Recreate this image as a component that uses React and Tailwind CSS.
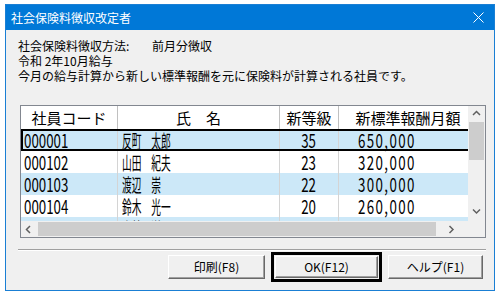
const rows = [
  { code: "000001", name: "反町　太郎", grade: "35", amount: "650,000" },
  { code: "000102", name: "山田　紀夫", grade: "23", amount: "320,000" },
  { code: "000103", name: "渡辺　崇", grade: "22", amount: "300,000" },
  { code: "000104", name: "鈴木　光一", grade: "20", amount: "260,000" },
  { code: "000105", name: "小林　洋子", grade: "26", amount: "470,000" },
];

const Chevron = ({ dir }) => {
  const d = {
    up: "M1 5L4.5 1.5L8 5",
    down: "M1 1.5L4.5 5L8 1.5",
    left: "M5 1L1.5 4.5L5 8",
    right: "M1.5 1L5 4.5L1.5 8",
  }[dir];
  return (
    <svg width="9" height="9" viewBox="0 0 9 9">
      <path d={d} fill="none" stroke="#606060" strokeWidth="1.5" />
    </svg>
  );
};

const Button = ({ children, className = "" }) => (
  <div
    className={`flex items-center justify-center bg-[#f0f0f0] border-t border-l border-white border-r border-b border-r-[#696969] border-b-[#696969] shadow-[inset_-1px_-1px_0_#a0a0a0] text-[12px] leading-none ${className}`}
  >
    {children}
  </div>
);

export default function App() {
  return (
    <div className="w-[499px] h-[296px] bg-white pt-[4px] pl-[5px] font-['Noto_Sans_CJK_JP',sans-serif] text-black">
      <div className="w-[490px] h-[287px] border border-[#1a7fd4] bg-[#f0f0f0] flex flex-col">
        {/* title bar */}
        <div className="h-[25px] shrink-0 bg-[#0078d7] flex items-center justify-between pl-[5px] pr-[10px] text-white text-[12px]">
          <span>社会保険料徴収改定者</span>
          <svg width="11" height="11" viewBox="0 0 11 11">
            <path d="M0.5 0.5L10.5 10.5M10.5 0.5L0.5 10.5" stroke="white" strokeWidth="1" />
          </svg>
        </div>

        {/* description */}
        <div className="pl-[12px] pt-[8px] text-[12px] leading-[15px]">
          <div className="flex">
            <span className="w-[134px]">社会保険料徴収方法:</span>
            <span>前月分徴収</span>
          </div>
          <div>令和 2年10月給与</div>
          <div>今月の給与計算から新しい標準報酬を元に保険料が計算される社員です。</div>
        </div>

        {/* list */}
        <div className="ml-[14px] mt-[22px] w-[466px] h-[133px] border border-[#828790] bg-white flex flex-col">
          <div className="flex h-[115px]">
            <div className="w-[447px] overflow-hidden">
              <div className="flex h-[23px] w-[456px] bg-white text-[15px] leading-[23px]">
                <div className="w-[97px] text-center border-r border-[#c0c0c0]">社員コード</div>
                <div className="w-[162px] text-center border-r border-[#c0c0c0]">氏　名</div>
                <div className="w-[59px] text-center border-r border-[#c0c0c0]">新等級</div>
                <div className="w-[138px] text-center">新標準報酬月額</div>
              </div>
              {rows.map((r, i) => (
                <div
                  key={r.code}
                  className={`flex h-[22px] w-[456px] leading-[22px] ${i % 2 === 0 ? "bg-[#cce8f8]" : "bg-white"} ${i === 0 ? "outline-2 outline-black -outline-offset-2" : ""}`}
                >
                  <div className="w-[97px] pl-[3px] border-r border-[#d4d4d4] text-[19px]">
                    <span className="inline-block origin-left scale-x-[0.7]">{r.code}</span>
                  </div>
                  <div className="w-[162px] pl-[4px] border-r border-[#d4d4d4] text-[18px] whitespace-nowrap">
                    <span className="inline-block origin-left scale-x-[0.54]">{r.name}</span>
                  </div>
                  <div className="w-[59px] text-center border-r border-[#d4d4d4] text-[19px]">
                    <span className="inline-block origin-center scale-x-[0.7]">{r.grade}</span>
                  </div>
                  <div className="w-[138px] pl-[19px] text-[19px]">
                    <span className="inline-block origin-left scale-x-[0.7] tracking-[2px]">{r.amount}</span>
                  </div>
                </div>
              ))}
            </div>
            <div className="w-[17px] bg-[#f0f0f0] flex flex-col">
              <div className="h-[16px] flex items-center justify-center">
                <Chevron dir="up" />
              </div>
              <div className="h-[38px] mx-[1px] bg-[#cdcdcd]" />
              <div className="flex-1" />
              <div className="h-[17px] flex items-center justify-center">
                <Chevron dir="down" />
              </div>
            </div>
          </div>
          <div className="flex h-[16px]">
            <div className="w-[447px] bg-[#f0f0f0] flex items-center">
              <div className="w-[17px] flex items-center justify-center">
                <Chevron dir="left" />
              </div>
              <div className="w-[398px] h-[14px] bg-[#cdcdcd]" />
              <div className="flex-1 flex items-center justify-center">
                <Chevron dir="right" />
              </div>
            </div>
            <div className="w-[17px] bg-[#f0f0f0]" />
          </div>
        </div>

        {/* separator */}
        <div className="ml-[12px] mt-[11px] w-[468px] border-t border-[#a0a0a0] border-b border-b-white" />

        {/* buttons */}
        <div className="flex items-center ml-[162px] mt-[1px]">
          <Button className="w-[97px] h-[24px]">印刷(F8)</Button>
          <div className="ml-[6px] w-[111px] h-[30px] border-[3px] border-black p-[1px] flex">
            <Button className="flex-1">OK(F12)</Button>
          </div>
          <Button className="ml-[6px] w-[95px] h-[24px]">ヘルプ(F1)</Button>
        </div>
      </div>
    </div>
  );
}
